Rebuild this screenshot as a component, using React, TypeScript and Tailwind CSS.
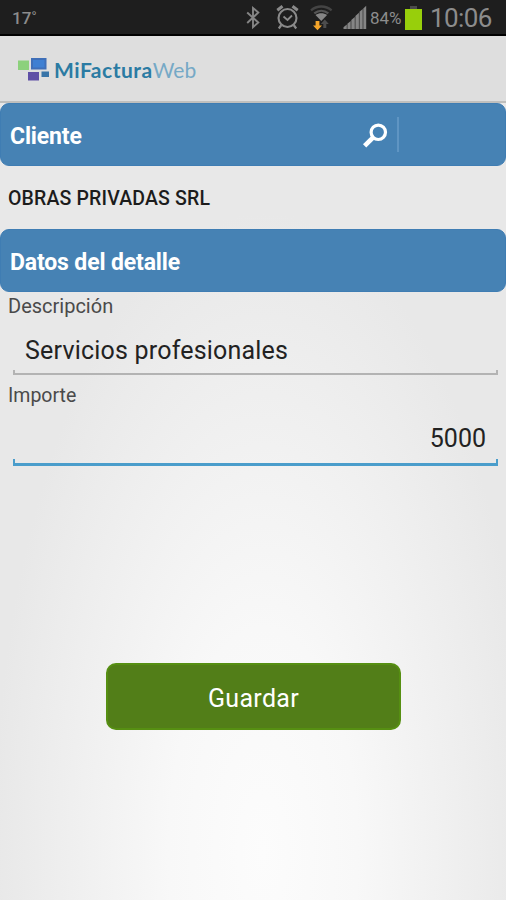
import type { ReactNode } from "react";

type SectionHeaderProps = {
  title: string;
  children?: ReactNode;
};

type FieldLineProps = {
  focused?: boolean;
};

function StatusIcons() {
  return (
    <svg width="132" height="36" viewBox="244 0 132 36" fill="none" className="shrink-0">
      {/* bluetooth */}
      <path
        d="M247.2 13.5 258.3 23.5l-5.3 4.7V9l5.3 4.5L247.2 24"
        stroke="#858585"
        strokeWidth="1.9"
      />
      {/* alarm */}
      <g stroke="#8a8a8a">
        <circle cx="287.5" cy="19" r="9" strokeWidth="2.1" />
        <path d="m283.5 17.5 4 3.5 4.5-4.5" strokeWidth="1.8" />
        <path d="m277.3 11.2 5.2-4M297.7 11.2l-5.2-4" strokeWidth="3" />
        <path d="m281.3 26-2.5 3.5M293.7 26l2.5 3.5" strokeWidth="2.2" />
      </g>
      {/* wifi */}
      <g strokeWidth="2.3">
        <path d="M311 11.3c6-5.1 14.6-5.1 20.6 0" stroke="#444" />
        <path d="M314.3 14.4c4.2-3.4 9.8-3.4 14 0" stroke="#555" />
      </g>
      <path d="M315.5 16c3.4-2.5 8.2-2.5 11.6 0l-5.8 6z" fill="#858585" />
      <path d="M324.8 20.5 328.8 25H326.3v4h-3v-4h-2.5z" fill="#4d4d4d" />
      <path d="M315.6 22h3.8v4.5h2.6l-4.5 4.8-4.5-4.8h2.6z" fill="#f5a52a" />
      {/* mobile signal */}
      <g fill="#858585">
        <path d="M343.5 30v-1.8l3.3-2.7V30zM347.4 30v-5.3l3.3-2.8V30zM351.3 30v-9l3.5-3v12zM355.4 30V17l3.5-3.2V30zM359.5 30V12.8l3.2-2.8v20z" />
        <path d="M363.3 30V9.5l2.9-2.7V30z" />
      </g>
    </svg>
  );
}

function StatusBar() {
  return (
    <div className="flex h-9 items-center border-b-2 border-black bg-[#1e1e1e] text-[#8c8c8c]">
      <span className="ml-3 w-[232px] pt-0.5 text-[17px] leading-none font-medium">17˚</span>
      <StatusIcons />
      <span className="-ml-[6px] w-[35px] pt-0.5 text-[17px] leading-none">84%</span>
      <div className="flex w-[17px] flex-col items-center pt-0.5">
        <div className="h-[3px] w-[7px] bg-[#4b4b4b]" />
        <div className="h-[21px] w-[17px] bg-[#98cf0b]" />
      </div>
      <span className="ml-[8px] pt-0.5 text-[26px] leading-none tracking-[-0.6px]">10:06</span>
    </div>
  );
}

function AppHeader() {
  return (
    <header className="flex h-[67px] items-center border-b-2 border-[#bfbfbd] bg-[#dedede] pt-px pl-[17px]">
      <svg width="33" height="25" viewBox="0 0 33 25">
        <rect x="1" y="3.5" width="11" height="9.5" fill="#8cd17c" />
        <rect x="14" y="1" width="15.5" height="11.5" fill="#3f6fb8" />
        <rect x="16" y="3" width="11.5" height="7.5" fill="#3e7fd2" />
        <rect x="11" y="15" width="11" height="8.5" fill="#5f4fa6" />
        <rect x="24.5" y="14.5" width="7.5" height="5.5" fill="#3874a8" />
      </svg>
      <p className="ml-[4px] font-[Lato,sans-serif] text-[21px] leading-none whitespace-nowrap text-[#2b7ba3]">
        <span className="font-bold tracking-[0.5px]">MiFactura</span>
        <span className="tracking-[0.1px] text-[#76a9c6]">Web</span>
      </p>
    </header>
  );
}

function SectionHeader({ title, children }: SectionHeaderProps) {
  return (
    <div className="flex h-[63px] items-center rounded-[9px] border border-[#3f7db3] bg-[#4682b4] pl-[9px]">
      <h2 className="grow pt-1 text-[23px] leading-none font-bold tracking-[-0.15px] text-white">
        {title}
      </h2>
      {children}
    </div>
  );
}

function FieldLine({ focused = false }: FieldLineProps) {
  return (
    <div
      className={
        focused
          ? "ml-[13px] h-[7px] w-[485px] border-x-2 border-b-3 border-[#4a9dcb]"
          : "ml-[13px] h-[5px] w-[485px] border-x-2 border-b-2 border-[#b3b3b3]"
      }
    />
  );
}

export default function App() {
  return (
    <div className="flex h-[900px] w-[506px] flex-col overflow-hidden bg-[#e8e8e8] font-[Roboto,sans-serif]">
      <StatusBar />
      <AppHeader />
      <main className="flex grow flex-col bg-[radial-gradient(ellipse_270px_640px_at_52%_94%,#fcfcfc_0%,#f8f8f8_35%,#e8e8e8_100%)]">
        <SectionHeader title="Cliente">
          <svg width="28" height="28" viewBox="0 0 28 28" fill="none" stroke="#fff">
            <circle cx="17.3" cy="11.3" r="7.2" strokeWidth="3.2" />
            <path d="m12.2 16.3-8.6 8.6" strokeWidth="4.6" />
          </svg>
          <div className="mr-[106px] ml-[8px] h-[35px] w-[2px] bg-[#5f95c3]" />
        </SectionHeader>
        <p className="flex h-[63px] items-center pt-0.5 pl-2 text-[19.5px] leading-none font-medium tracking-[0.15px] text-[#1c1c1c]">
          OBRAS PRIVADAS SRL
        </p>
        <SectionHeader title="Datos del detalle" />
        <label className="flex h-[30px] items-center pb-[2px] pl-2 text-[20px] leading-none text-[#4a4a4a]">
          Descripción
        </label>
        <p className="flex h-[48px] items-center pt-[8px] pl-[25px] text-[25px] leading-none tracking-[0.2px] text-[#222]">
          Servicios profesionales
        </p>
        <FieldLine />
        <label className="mt-[5px] flex h-[32px] items-center pl-2 text-[19.5px] leading-none text-[#4a4a4a]">
          Importe
        </label>
        <p className="flex h-[47px] items-center justify-end pt-[6px] pr-[20px] text-[25px] leading-none text-[#222]">
          5000
        </p>
        <FieldLine focused />
        <button className="mt-[197px] ml-[106px] h-[67px] w-[295px] rounded-[10px] border-2 border-[#568f12] bg-[#527e18] pt-[3px] text-[25px] leading-none tracking-[0.3px] text-white">
          Guardar
        </button>
      </main>
    </div>
  );
}
